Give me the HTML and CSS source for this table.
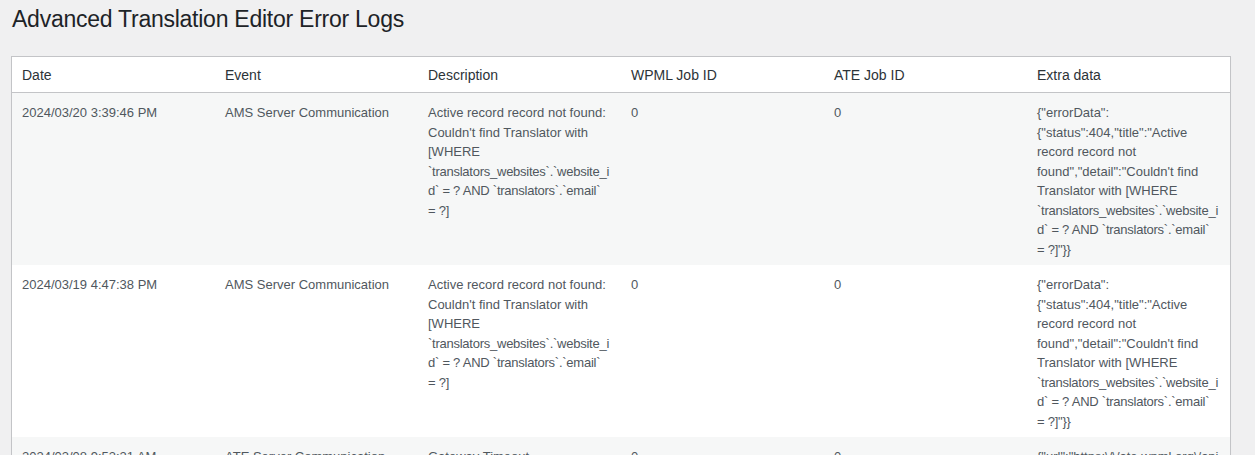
FILE: index.html
```html
<!DOCTYPE html>
<html lang="en">
<head>
<meta charset="utf-8">
<title>Advanced Translation Editor Error Logs</title>
<link rel="stylesheet" href="styles.css">
</head>
<body>
<div class="wrap">
  <h1 class="page-title">Advanced Translation Editor Error Logs</h1>
  <table class="logs">
    <thead>
      <tr>
        <th>Date</th>
        <th>Event</th>
        <th>Description</th>
        <th>WPML Job ID</th>
        <th>ATE Job ID</th>
        <th>Extra data</th>
      </tr>
    </thead>
    <tbody>
      <tr>
        <td>2024/03/20 3:39:46 PM</td>
        <td>AMS Server Communication</td>
        <td>Active record record not found: Couldn't find Translator with [WHERE <span class="sql">`translators_websites`.`website_id` = ? AND `translators`.`email` =&nbsp;?]</span></td>
        <td>0</td>
        <td>0</td>
        <td>{"errorData":{"status":404,"title":"Active record record not found","detail":"Couldn't find Translator with [WHERE <span class="sql">`translators_websites`.`website_id` = ? AND `translators`.`email` =&nbsp;?]"}}</span></td>
      </tr>
      <tr>
        <td>2024/03/19 4:47:38 PM</td>
        <td>AMS Server Communication</td>
        <td>Active record record not found: Couldn't find Translator with [WHERE <span class="sql">`translators_websites`.`website_id` = ? AND `translators`.`email` =&nbsp;?]</span></td>
        <td>0</td>
        <td>0</td>
        <td>{"errorData":{"status":404,"title":"Active record record not found","detail":"Couldn't find Translator with [WHERE <span class="sql">`translators_websites`.`website_id` = ? AND `translators`.`email` =&nbsp;?]"}}</span></td>
      </tr>
      <tr>
        <td>2024/03/08 9:53:21 AM</td>
        <td>ATE Server Communication</td>
        <td>Gateway Timeout</td>
        <td>0</td>
        <td>0</td>
        <td>{"url":"https:\/\/ate.wpml.org\/api\/wpml\/jobs","status":504}</td>
      </tr>
    </tbody>
  </table>
</div>
</body>
</html>
```
FILE: styles.css
```css
html, body {
  margin: 0;
  padding: 0;
  background: #f0f0f1;
  color: #3c434a;
  font-family: "Liberation Sans", Arial, sans-serif;
  font-size: 13px;
}

.wrap {
  padding: 0 24px 0 11px;
}

.page-title {
  margin: 0;
  padding: 5px 0 4px 1px;
  font-size: 23px;
  font-weight: 400;
  line-height: 1.3;
  letter-spacing: -0.25px;
  color: #1d2327;
}

.logs {
  width: 100%;
  margin-top: 17px;
  table-layout: fixed;
  border-spacing: 0;
  background: #fff;
  border: 1px solid #c3c4c7;
  box-shadow: 0 1px 1px rgba(0, 0, 0, 0.04);
}

.logs th {
  text-align: left;
  font-weight: 400;
  font-size: 14px;
  line-height: 1.4em;
  padding: 9px 10px 7px;
  color: #2c3338;
  border-bottom: 1px solid #c3c4c7;
}

.logs td {
  vertical-align: top;
  font-size: 13px;
  line-height: 1.5em;
  padding: 10px 10px 6px;
  color: #50575e;
  overflow-wrap: break-word;
  word-wrap: break-word;
}

.logs .sql {
  letter-spacing: -0.25px;
}

.logs tbody tr:nth-child(odd) {
  background: #f6f7f7;
}
```
